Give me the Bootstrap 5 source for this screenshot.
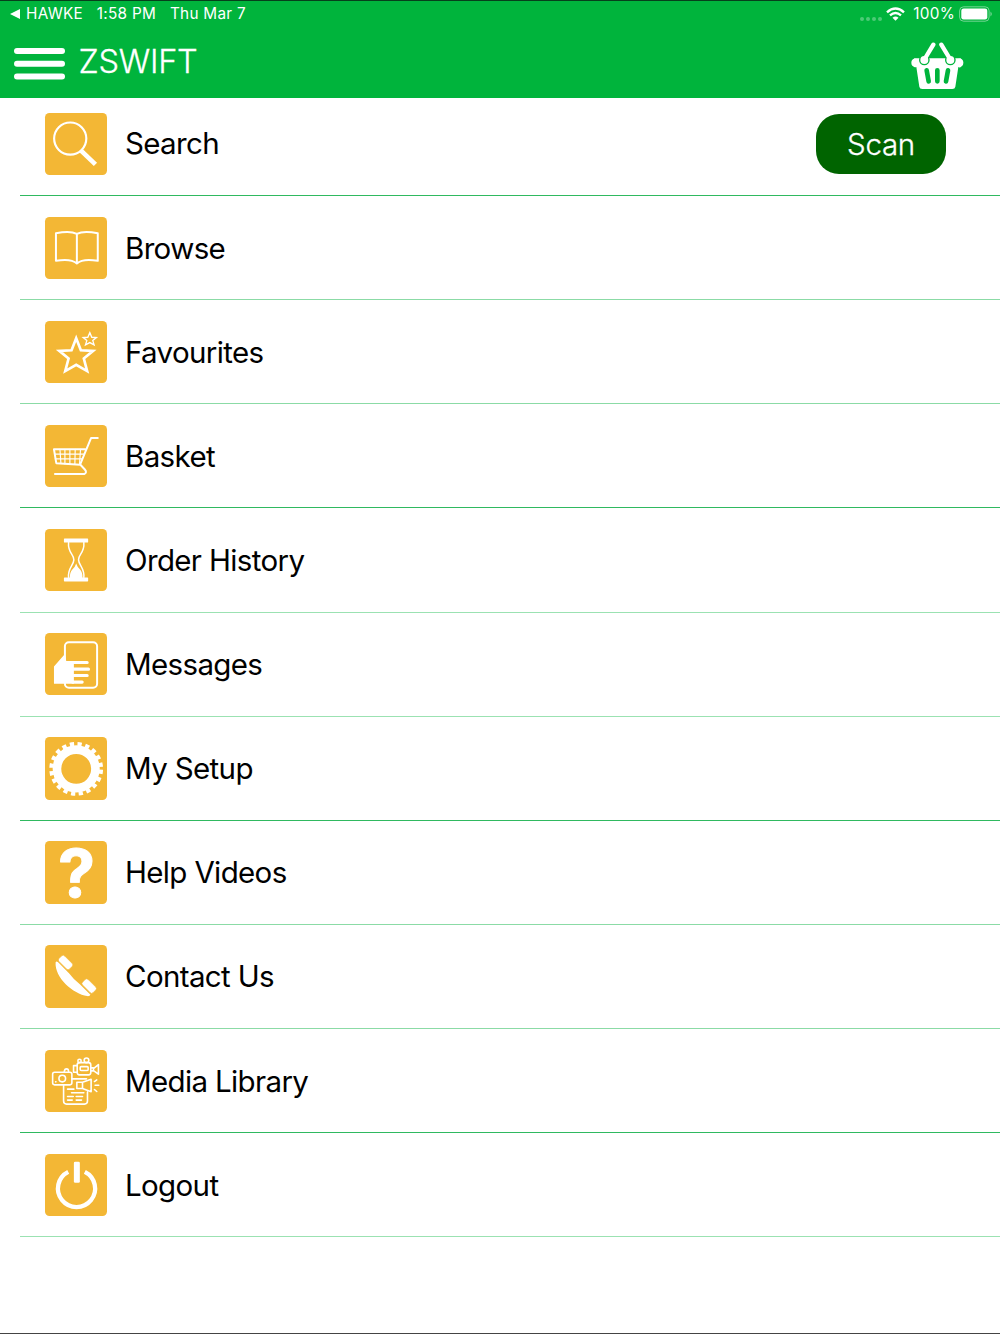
<!DOCTYPE html>
<html lang="en">
<head>
<meta charset="utf-8">
<meta name="viewport" content="width=device-width, initial-scale=1">
<title>ZSWIFT</title>
<link href="https://cdn.jsdelivr.net/npm/bootstrap@5.3.0/dist/css/bootstrap.min.css" rel="stylesheet">
<style>
body{font-family:Inter,"Liberation Sans",sans-serif;background:#fff;color:#000;height:1334px;overflow:hidden;border-bottom:1px solid #444}
.app-head{background:#00b43c;height:98px;border-top:1px solid #06401c;color:#fff}
.status{height:25px;font-size:15.3px;line-height:24px;padding:0 7px 0 10px;letter-spacing:.3px}
.status svg,.bar svg{display:block;flex:none}
.status-left{gap:13.7px;margin-left:6px}
.dots{margin-top:10px}
.bar{height:72px;padding:3px 36px 0 14px}
.brand{font-size:32.5px;font-weight:300;line-height:40px;margin-left:13.5px;letter-spacing:-.25px;margin-top:-3px;-webkit-text-stroke:.3px #fff}
.menu{margin-left:20px}
.menu-row{height:104.13px;padding:20.6px 54px 0 24.6px;border-bottom:1px solid #8bdba6;color:#000;text-decoration:none}
.menu-row:first-child{height:98px;padding-top:14.6px}
.menu-row.solid{border-color:#2fb960}
.menu-row.soft{border-color:#9be2b2}
.tile{width:62.4px;height:62.4px;flex:none;background:#f3b735;border-radius:4.5px;display:block;fill:none;stroke:#fff;stroke-linecap:round;stroke-linejoin:round}
.label{font-size:29.5px;line-height:62px;margin-left:18px;margin-top:-.1px;white-space:nowrap;letter-spacing:-.64px}
.menu-row:first-child .label{margin-top:-.6px}
.scan{width:130px;height:60px;border-radius:23px;background:#006400;color:#fff;font-size:29.5px;font-weight:300;-webkit-text-stroke:.3px #fff;margin-top:1px;padding:0;line-height:60px;border:0;letter-spacing:-.3px}
</style>
</head>
<body>
<header class="app-head">
  <div class="status d-flex align-items-center">
    <svg width="10" height="10" viewBox="0 0 10 10"><path d="M0 5L10 0V10Z" fill="#fff"/></svg>
    <div class="status-left d-flex"><span>HAWKE</span><span>1:58 PM</span><span>Thu Mar 7</span></div>
    <svg class="dots ms-auto" width="22" height="4" viewBox="0 0 22 4" fill="#fff" opacity=".3"><circle cx="2" cy="2" r="2"/><circle cx="8" cy="2" r="2"/><circle cx="14" cy="2" r="2"/><circle cx="20" cy="2" r="2"/></svg>
    <svg class="ms-1 me-2" width="19" height="14" viewBox="0 0 19 14" fill="none" stroke="#fff" stroke-width="2.400"><path d="M1 5.300Q9.500-2.300 18 5.300M4 8.400Q9.500 3.700 15 8.400"/><path d="M6.500 10.700Q9.500 8.300 12.500 10.700L9.500 13.700Z" fill="#fff" stroke="none"/></svg>
    <span>100%</span>
    <svg class="ms-1" width="34" height="16" viewBox="0 0 34 16"><rect x=".6" y=".8" width="29.500" height="14.400" rx="4" fill="none" stroke="#fff" stroke-opacity=".45"/><rect x="2.300" y="2.500" width="26" height="11" rx="2.300" fill="#fff"/><path d="M31.500 5.500Q34 8 31.500 10.500Z" fill="#fff" opacity=".5"/></svg>
  </div>
  <nav class="bar d-flex align-items-center">
    <svg width="51" height="32" viewBox="0 0 51 32" fill="#fff"><rect width="51" height="6" rx="3"/><rect y="12.800" width="51" height="6" rx="3"/><rect y="25.500" width="51" height="6" rx="3"/></svg>
    <span class="brand">ZSWIFT</span>
    <svg class="ms-auto mt-1" width="53" height="48" viewBox="333 126 159 144">
      <path d="M343 175H482A7 12 0 0 1 475 201L466 260Q465 267 457 267H367Q359 267 358 260L349 201A7 12 0 0 1 343 175Z" fill="#fff"/>
      <circle cx="346" cy="188" r="12" fill="#fff"/><circle cx="478" cy="188" r="12" fill="#fff"/>
      <g fill="#00b43c"><circle cx="373" cy="180" r="16"/><circle cx="451" cy="180" r="16"/></g>
      <g fill="#fff"><circle cx="373" cy="180" r="12"/><circle cx="451" cy="180" r="12"/></g>
      <g stroke="#fff" stroke-width="13" stroke-linecap="round"><path d="M374 177L400 134M450 177L424 134"/></g>
      <g stroke="#00b43c" stroke-width="14" stroke-linecap="round"><path d="M380 211L386 244M412 211V244M444 211L438 244"/></g>
    </svg>
  </nav>
</header>
<main class="menu">
  <a class="menu-row solid d-flex align-items-start">
    <svg class="tile" viewBox="2 0 188 188"><circle cx="78" cy="77" r="48.500" stroke-width="6.500"/><path d="M109 112L154 155" stroke-width="14" stroke-linecap="butt"/></svg>
    <span class="label">Search</span><button class="scan btn ms-auto">Scan</button></a>
  <a class="menu-row d-flex align-items-start">
    <svg class="tile" viewBox="2 0 188 188" stroke-width="6"><path d="M98 51Q78 40 35 49V132Q80 124 98 140Q116 124 161 132V49Q118 40 98 51V138"/></svg>
    <span class="label">Browse</span></a>
  <a class="menu-row d-flex align-items-start">
    <svg class="tile" viewBox="2 0 188 188"><path style="stroke-linejoin:miter" stroke-width="8" d="M96 52L110 88L147 90L119 113L129 151L96 132L63 151L73 113L45 90L82 88Z"/><path style="stroke-linejoin:miter" stroke-width="4" d="M137 35L143 49L157 50L146 59L150 72L137 65L124 72L128 59L117 50L131 49Z"/></svg>
    <span class="label">Favourites</span></a>
  <a class="menu-row solid d-flex align-items-start">
    <svg class="tile" viewBox="2 0 188 188" stroke-width="6"><path d="M161 39H141L108 119L122 134Q130 143 120 148H32M123 73H29L36 115L108 120"/><path stroke-width="3.500" d="M31 88H119M33 102H114M47 73L50 116M62 73V117M77 73V118M93 73L92 119M109 73L106 119"/></svg>
    <span class="label">Basket</span></a>
  <a class="menu-row soft d-flex align-items-start">
    <svg class="tile" viewBox="2 0 188 188"><path stroke="none" fill="#fff" d="M61 29H130Q132 29 132 31V39Q132 41 130 41H61Q59 41 59 39V31Q59 29 61 29ZM61 146H130Q132 146 132 148V156Q132 158 130 158H61Q59 158 59 156V148Q59 146 61 146ZM96 104Q99 114 107 121Q116 131 115 147H77Q76 131 85 121Q93 114 96 104Z"/><path stroke-width="4.500" d="M73 41C70 72 90 76 89 93C88 110 70 118 73 146M119 41C122 72 102 76 103 93C104 110 122 118 119 146"/></svg>
    <span class="label">Order History</span></a>
  <a class="menu-row soft d-flex align-items-start">
    <svg class="tile" viewBox="2 0 188 188"><rect x="62" y="28" width="97" height="137" rx="12" stroke-width="6"/><path fill="#fff" stroke="none" d="M29 101L62 63L66 84H89V153H29Z"/><path stroke="#f3b735" stroke-width="6" stroke-linecap="butt" d="M69 157H90"/><path stroke-width="9.500" d="M85 89H129M85 109H133M85 128H129M85 148H114"/></svg>
    <span class="label">Messages</span></a>
  <a class="menu-row solid d-flex align-items-start">
    <svg class="tile" viewBox="2 0 188 188"><circle cx="96" cy="96" r="58" stroke-width="26"/><circle cx="96" cy="96" r="75" stroke-width="12" pathLength="200" stroke-dasharray="5.500 4.500" stroke-dashoffset="-1" stroke-linecap="butt"/></svg>
    <span class="label">My Setup</span></a>
  <a class="menu-row d-flex align-items-start">
    <svg class="tile overflow-visible" viewBox="2 0 188 188"><text x="97" y="168" text-anchor="middle" font-size="200" font-weight="700" fill="#fff" stroke="#fff" stroke-width="3">?</text></svg>
    <span class="label">Help Videos</span></a>
  <a class="menu-row d-flex align-items-start">
    <svg class="tile" viewBox="2 0 188 188"><g fill="#fff" stroke="none"><path d="M34 52Q37 46 44 54L75 86Q88 104 107 118L139 150Q137 155 129 154C88 148 30 98 34 52Z"/><g stroke="#f3b735" stroke-width="2"><rect x="-22" y="-13" width="45" height="24" rx="6" transform="translate(63 53) rotate(45)"/><rect x="-22" y="-13" width="45" height="24" rx="6" transform="translate(134 124) rotate(45)"/></g></g></svg>
    <span class="label">Contact Us</span></a>
  <a class="menu-row solid d-flex align-items-start">
    <svg class="tile" viewBox="2 0 188 188" stroke-width="4.800"><rect x="25" y="67" width="58" height="38" rx="6"/><circle cx="54" cy="86" r="10"/><path d="M60 65Q61 57 67 57T73 65M34 96h1M83 87H127"/><rect x="99" y="38" width="41" height="37" rx="7"/><rect x="108" y="50" width="24" height="12" rx="3"/><path d="M98 47H88V67H98M141 54H148V63H141M148 56L163 44V73L148 62"/><circle cx="106" cy="33" r="5"/><circle cx="127" cy="31" r="7"/><path d="M98 97H115V116H98ZM115 97L141 88V126L115 116M151 95L158 90M153 106H164M151 119L158 125M58 106V154Q58 163 67 163H121Q130 163 130 154V127M70 118H89M82 129H119M70 140H87M96 140H115M70 151H84M96 151H112"/></svg>
    <span class="label">Media Library</span></a>
  <a class="menu-row soft d-flex align-items-start">
    <svg class="tile" viewBox="2 0 188 188"><path stroke-width="13" stroke-linecap="butt" d="M72 54A56 56 0 1 0 122 54"/><rect x="89" y="23" width="18" height="64" rx="4" fill="#fff" stroke="none"/></svg>
    <span class="label">Logout</span></a>
</main>
<script src="https://cdn.jsdelivr.net/npm/bootstrap@5.3.0/dist/js/bootstrap.bundle.min.js"></script>
</body>
</html>
